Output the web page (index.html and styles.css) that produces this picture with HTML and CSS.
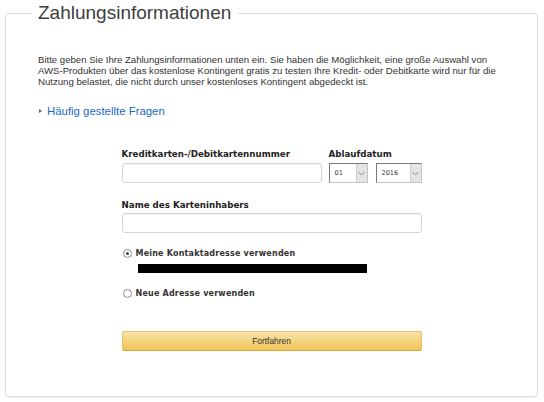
FILE: index.html
```html
<!DOCTYPE html>
<html lang="de">
<head>
<meta charset="utf-8">
<title>Zahlungsinformationen</title>
<link rel="stylesheet" href="styles.css">
</head>
<body>
<fieldset class="panel">
  <legend class="panel-title">Zahlungsinformationen</legend>
  <p class="intro">Bitte geben Sie Ihre Zahlungsinformationen unten ein. Sie haben die Möglichkeit, eine große Auswahl von AWS-Produkten über das kostenlose Kontingent gratis zu testen Ihre Kredit- oder Debitkarte wird nur für die Nutzung belastet, die nicht durch unser kostenloses Kontingent abgedeckt ist.</p>
  <div class="faq"><span class="faq-arrow"></span><a href="#" class="faq-link">Häufig gestellte Fragen</a></div>

  <form class="form">
    <div class="row">
      <div class="field card">
        <label class="label">Kreditkarten-/Debitkartennummer</label>
        <div class="input"></div>
      </div>
      <div class="field expiry">
        <label class="label">Ablaufdatum</label>
        <div class="selects">
          <div class="select month"><span class="select-value">01</span><span class="select-btn"><svg width="7" height="5" viewBox="0 0 7 5"><path d="M0.5 1 L3.5 4 L6.5 1" fill="none" stroke="#8a8a8a" stroke-width="1"/></svg></span></div>
          <div class="select year"><span class="select-value">2016</span><span class="select-btn"><svg width="7" height="5" viewBox="0 0 7 5"><path d="M0.5 1 L3.5 4 L6.5 1" fill="none" stroke="#8a8a8a" stroke-width="1"/></svg></span></div>
        </div>
      </div>
    </div>

    <div class="field name">
      <label class="label">Name des Karteninhabers</label>
      <div class="input"></div>
    </div>

    <div class="radio-row first"><span class="radio checked"></span><span class="radio-label">Meine Kontaktadresse verwenden</span></div>
    <div class="redacted"></div>
    <div class="radio-row second"><span class="radio"></span><span class="radio-label">Neue Adresse verwenden</span></div>

    <div class="button">Fortfahren</div>
  </form>
</fieldset>
</body>
</html>
```
FILE: styles.css
```css
html, body {
  margin: 0;
  padding: 0;
  background: #fff;
}
body {
  font-family: "Liberation Sans", Arial, sans-serif;
  color: #333;
  width: 544px;
  height: 402px;
  overflow: hidden;
}
.panel {
  margin: 0 6px 0 5px;
  padding: 28px 32px 45px 32px;
  border: 1px solid #dcdcdc;
  border-radius: 4px;
  box-shadow: 0 1px 1px rgba(0,0,0,0.06);
  min-width: 0;
}
.panel-title {
  margin-left: -6px;
  padding: 0 7px 0 6px;
  font-size: 19px;
  line-height: 26px;
  color: #3e3e3e;
  font-weight: normal;
}
.intro {
  margin: 0;
  font-size: 9.6px;
  line-height: 11px;
  color: #333;
  width: 468px;
}
.faq {
  margin-top: 17px;
  display: flex;
  align-items: center;
  height: 14px;
  padding-left: 1px;
}
.faq-arrow {
  width: 0;
  height: 0;
  border-top: 2.5px solid transparent;
  border-bottom: 2.5px solid transparent;
  border-left: 3px solid #666;
  margin-right: 5px;
}
.faq-link {
  color: #1b69c4;
  text-decoration: none;
  font-size: 11.4px;
}
.form {
  width: 300px;
  margin: 30px auto 0;
  display: flex;
  flex-direction: column;
}
.row {
  display: flex;
  gap: 7px;
}
.field {
  display: flex;
  flex-direction: column;
  gap: 3px;
}
.card { width: 200px; }
.label {
  font-family: "DejaVu Sans", Verdana, sans-serif;
  font-weight: bold;
  font-size: 8.7px;
  line-height: 12px;
  color: #222;
}
.input {
  height: 18px;
  border: 1px solid #d4d4d4;
  border-radius: 3px;
  box-shadow: inset 0 1px 1px rgba(0,0,0,0.05);
  background: #fff;
}
.selects {
  display: flex;
  gap: 8px;
}
.select {
  height: 20px;
  box-sizing: border-box;
  display: flex;
  align-items: center;
  border: 1px solid #c4c4c4;
  border-top-color: #7a7a7a;
  border-left-color: #7a7a7a;
  background: #fff;
}
.month { width: 39px; }
.year { width: 46px; }
.select-value {
  flex: 1;
  font-family: "DejaVu Sans", Verdana, sans-serif;
  font-size: 6.5px;
  color: #333;
  padding-left: 5px;
}
.select-btn {
  width: 10px;
  height: 18px;
  background: #e4e4e4;
  border-left: 1px solid #d0d0d0;
  display: flex;
  align-items: center;
  justify-content: center;
}
.name {
  margin-top: 16px;
  gap: 2px;
}
.radio-row {
  display: flex;
  align-items: center;
  height: 14px;
  margin-top: 13px;
}
.radio {
  width: 7px;
  height: 7px;
  border: 1px solid #8a8a8a;
  border-radius: 50%;
  margin-left: 1px;
  margin-right: 4px;
  box-sizing: content-box;
  display: flex;
  align-items: center;
  justify-content: center;
  background: #fff;
}
.radio.checked::after {
  content: "";
  width: 3px;
  height: 3px;
  border-radius: 50%;
  background: #444;
}
.radio-label {
  font-family: "DejaVu Sans", Verdana, sans-serif;
  font-weight: bold;
  font-size: 8px;
  letter-spacing: 0.2px;
  color: #333;
}
.redacted {
  margin-top: 4px;
  margin-left: 16px;
  width: 229px;
  height: 9px;
  background: #000;
}
.button {
  margin-top: 31px;
  height: 20px;
  box-sizing: border-box;
  border: 1px solid #e6c36a;
  border-bottom-color: #d3a53a;
  border-radius: 2px;
  background: linear-gradient(#f8e2a8, #f0c457);
  display: flex;
  align-items: center;
  justify-content: center;
  font-size: 8.4px;
  color: #333;
}
```
